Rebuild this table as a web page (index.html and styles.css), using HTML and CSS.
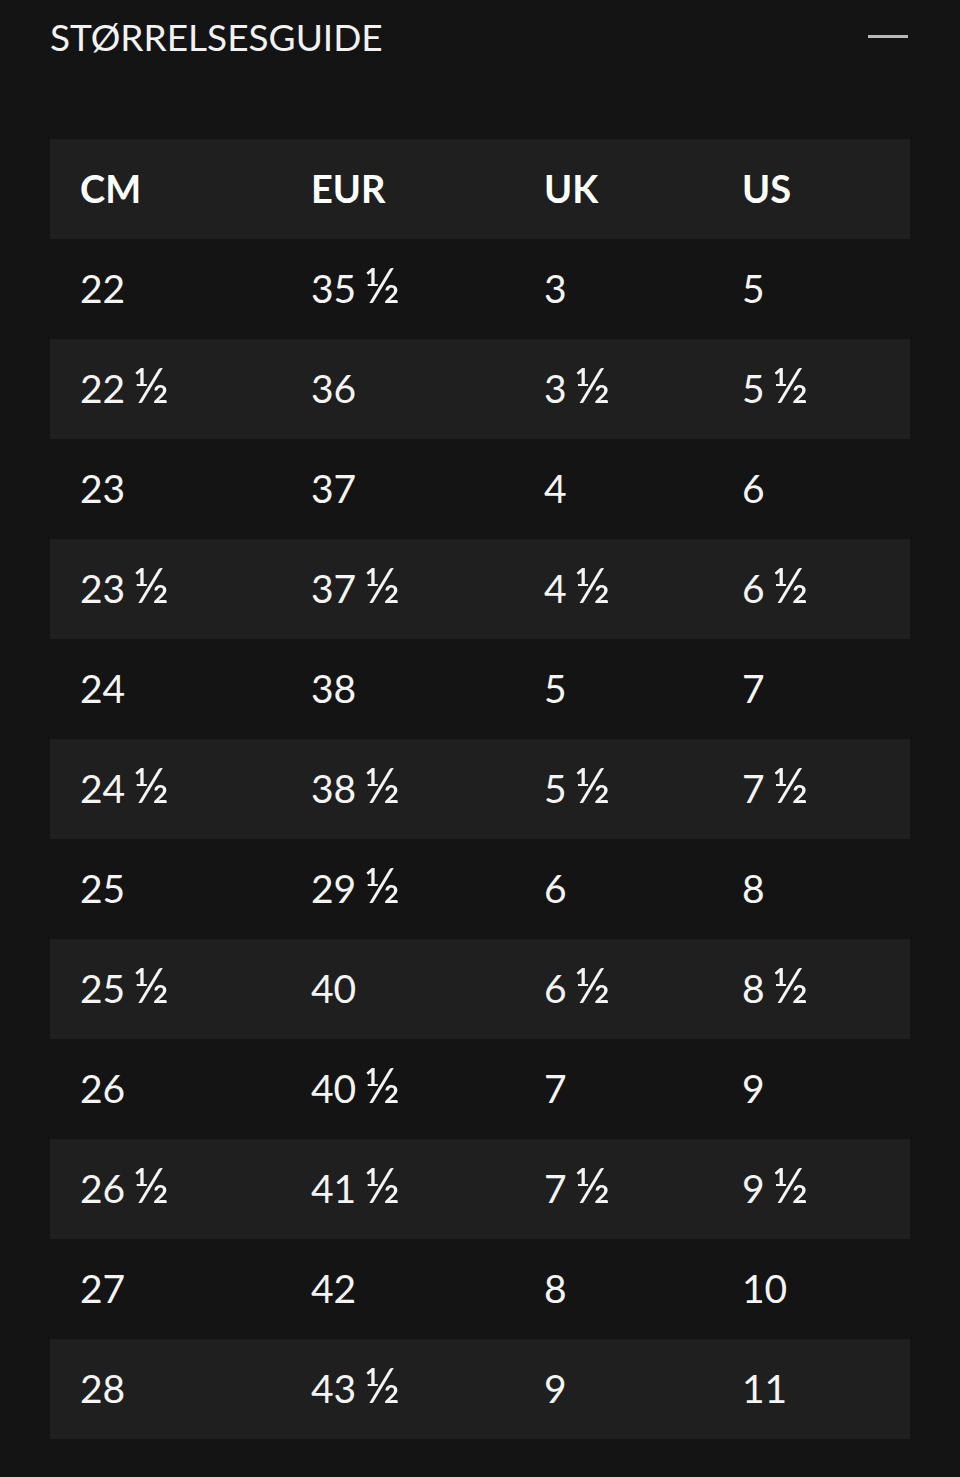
FILE: index.html
```html
<!DOCTYPE html>
<html lang="no">
<head>
<meta charset="utf-8">
<title>Størrelsesguide</title>
<link rel="stylesheet" href="styles.css">
</head>
<body>
<section class="guide">
  <header class="guide-head">
    <h2 class="guide-title">STØRRELSESGUIDE</h2>
    <span class="collapse" aria-label="Lukk"></span>
  </header>
  <div class="size-table">
    <div class="row head"><span>CM</span><span>EUR</span><span>UK</span><span>US</span></div>
    <div class="row"><span>22</span><span>35 <i class="half">½</i></span><span>3</span><span>5</span></div>
    <div class="row alt"><span>22 <i class="half">½</i></span><span>36</span><span>3 <i class="half">½</i></span><span>5 <i class="half">½</i></span></div>
    <div class="row"><span>23</span><span>37</span><span>4</span><span>6</span></div>
    <div class="row alt"><span>23 <i class="half">½</i></span><span>37 <i class="half">½</i></span><span>4 <i class="half">½</i></span><span>6 <i class="half">½</i></span></div>
    <div class="row"><span>24</span><span>38</span><span>5</span><span>7</span></div>
    <div class="row alt"><span>24 <i class="half">½</i></span><span>38 <i class="half">½</i></span><span>5 <i class="half">½</i></span><span>7 <i class="half">½</i></span></div>
    <div class="row"><span>25</span><span>29 <i class="half">½</i></span><span>6</span><span>8</span></div>
    <div class="row alt"><span>25 <i class="half">½</i></span><span>40</span><span>6 <i class="half">½</i></span><span>8 <i class="half">½</i></span></div>
    <div class="row"><span>26</span><span>40 <i class="half">½</i></span><span>7</span><span>9</span></div>
    <div class="row alt"><span>26 <i class="half">½</i></span><span>41 <i class="half">½</i></span><span>7 <i class="half">½</i></span><span>9 <i class="half">½</i></span></div>
    <div class="row"><span>27</span><span>42</span><span>8</span><span>10</span></div>
    <div class="row alt"><span>28</span><span>43 <i class="half">½</i></span><span>9</span><span>11</span></div>
  </div>
</section>
</body>
</html>
```

FILE: styles.css
```css
html, body {
  margin: 0;
  padding: 0;
  background: #141414;
}
body {
  font-family: Lato, "Noto Sans", "DejaVu Sans", sans-serif;
  color: #ffffff;
  height: 1477px;
  overflow: hidden;
}
.guide {
  padding: 0 50px;
}
.guide-head {
  display: flex;
  align-items: center;
  justify-content: space-between;
  height: 72px;
  margin-bottom: 67px;
}
.guide-title {
  margin: 0;
  font-weight: 400;
  font-size: 37px;
  letter-spacing: 0;
  color: #f2f2f2;
}
.collapse {
  display: block;
  width: 40px;
  height: 3px;
  background: #b8b8b8;
  margin-right: 2px;
}
.size-table {
  display: flex;
  flex-direction: column;
}
.row {
  display: grid;
  grid-template-columns: 231px 233px 198px 1fr;
  align-items: center;
  height: 100px;
  padding-left: 30px;
  font-size: 39px;
  line-height: 44px;
  font-weight: 400;
  color: #f4f4f4;
}
.row > span {
  margin-top: -3px;
}
.row.head,
.row.alt {
  background: #1f1f1f;
}
.row.head {
  font-size: 38px;
  font-weight: 700;
  color: #ffffff;
}
.half {
  font-style: normal;
  font-size: 1.26em;
  line-height: 0;
  margin-left: -2px;
}
```
